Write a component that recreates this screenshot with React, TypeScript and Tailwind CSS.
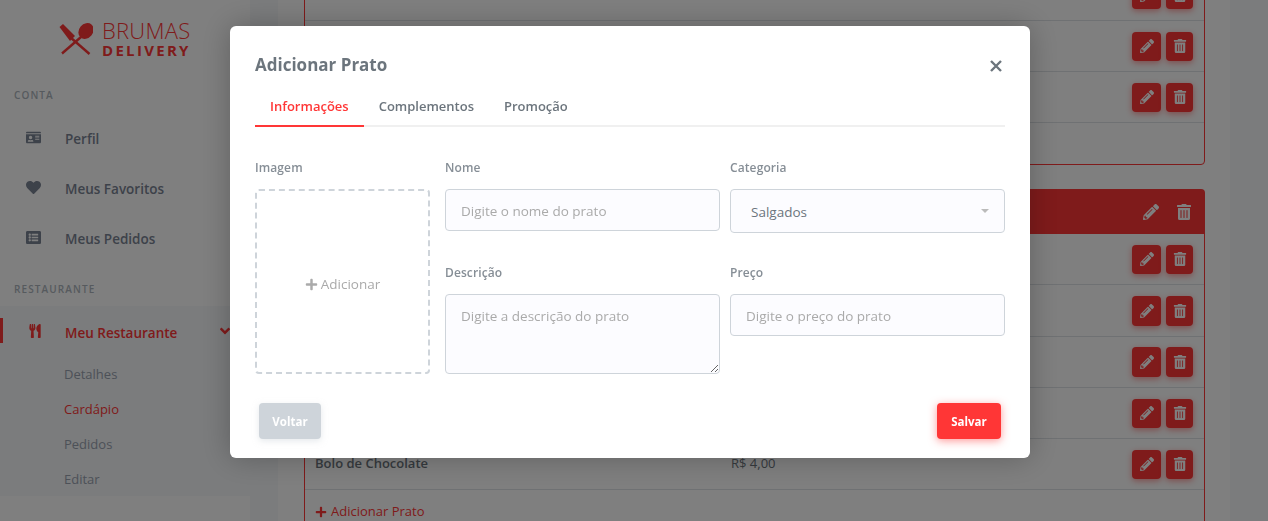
import { FaIdCard, FaHeart, FaListAlt, FaUtensils, FaPencilAlt, FaTrashAlt, FaPlus, FaAngleDown } from "react-icons/fa";

function Logo() {
  return (
    <div className="flex items-start pl-[59px] pt-[23px] h-[86px]">
      <svg width="34" height="33" viewBox="0 0 34 33" className="text-[#ff3636] shrink-0">
        <path d="M0.5 4 L4 1 L16 13 L11 18 Z" fill="currentColor" />
        <path d="M11 14 L30.5 31" stroke="currentColor" strokeWidth="2.4" fill="none" />
        <path d="M22 14 L3 30.5" stroke="currentColor" strokeWidth="2.4" fill="none" />
        <ellipse cx="27" cy="8" rx="7" ry="8.5" transform="rotate(40 27 8)" fill="currentColor" />
      </svg>
      <div className="ml-[9px] -mt-[3px] flex flex-col text-[#ff3636]">
        <span className="text-[22px] leading-[20px] font-light tracking-[0.25px]">BRUMAS</span>
        <span className="mt-[3px] text-[15px] leading-[15px] font-bold tracking-[2.3px]">DELIVERY</span>
      </div>
    </div>
  );
}

function SideItem({ icon, label }: { icon: React.ReactNode; label: string }) {
  return (
    <div className="flex items-center h-[50px] pl-[26px] text-[#7b8494]">
      <span className="w-[39px] text-[15px] flex -mt-[3px]">{icon}</span>
      <span className="text-[13.5px] font-semibold">{label}</span>
    </div>
  );
}

function Sidebar() {
  return (
    <aside className="w-[250px] shrink-0 bg-white">
      <Logo />
      <div className="h-[15px] mt-[2px] pl-[14px] text-[10px] leading-[15px] font-semibold tracking-[1.1px] text-[#adb5bd]">CONTA</div>
      <div className="mt-[11px]">
        <SideItem icon={<FaIdCard />} label="Perfil" />
        <SideItem icon={<FaHeart />} label="Meus Favoritos" />
        <SideItem icon={<FaListAlt />} label="Meus Pedidos" />
      </div>
      <div className="h-[15px] mt-[18px] pl-[14px] text-[10px] leading-[15px] font-semibold tracking-[1.1px] text-[#adb5bd]">RESTAURANTE</div>
      <div className="mt-[9px] bg-[#f6f8fb] h-[190px]">
        <div className="relative flex items-center h-[54px] pl-[26px] text-[#ff3636]">
          <span className="absolute left-0 top-[12px] w-[3px] h-[25px] bg-[#ff3636]" />
          <span className="w-[39px] text-[14px] flex pl-[2px] -mt-[4px]"><FaUtensils /></span>
          <span className="text-[13.5px] font-semibold">Meu Restaurante</span>
          <FaAngleDown className="absolute left-[217px] top-[17px] text-[16px]" />
        </div>
        <div className="pl-[64px] text-[13px] text-[#9aa3b0]">
          <div className="h-[35px] leading-[28px]">Detalhes</div>
          <div className="h-[35px] leading-[28px] text-[#ff3636] font-medium">Cardápio</div>
          <div className="h-[35px] leading-[28px]">Pedidos</div>
          <div className="h-[35px] leading-[28px]">Editar</div>
        </div>
      </div>
    </aside>
  );
}

function Row({ h, name, price, tall }: { h: string; name?: string; price?: string; tall?: boolean }) {
  return (
    <div className={`flex items-center justify-between border-b border-[#dee2e6] pl-[10px] pr-[11px] ${h}`}>
      <div className="flex items-center text-[13px] text-[#6c757d]">
        {name && <span className="w-[416px] font-semibold">{name}</span>}
        {price && <span>{price}</span>}
      </div>
      <div className="flex gap-[5px]">
        <span className={`w-[29px] ${tall ? "h-[30px]" : "h-[29px]"} flex items-center justify-center rounded-[4px] bg-[#ff3636] text-white text-[14px] shadow-[0_2px_6px_rgba(255,54,54,0.5)]`}><FaPencilAlt /></span>
        <span className={`w-[27px] ${tall ? "h-[30px]" : "h-[29px]"} flex items-center justify-center rounded-[4px] bg-[#ff3636] text-white text-[14px] shadow-[0_2px_6px_rgba(255,54,54,0.5)]`}><FaTrashAlt /></span>
      </div>
    </div>
  );
}

function Content() {
  return (
    <div className="ml-[28px] w-[952px] shrink-0 bg-white pl-[26px] pr-[25px] overflow-hidden">
      <div className="-mt-[32px] border border-[#ff3636] rounded-b-[4px]">
        <Row h="h-[52px]" />
        <Row h="h-[51px]" />
        <Row h="h-[51px]" />
        <div className="h-[41px]" />
      </div>
      <div className="mt-[24px] rounded-t-[4px] h-[45px] bg-[#ff3636] flex items-center justify-end gap-[17px] pr-[13px] text-white text-[16px]">
        <FaPencilAlt />
        <FaTrashAlt />
      </div>
      <div className="border-x border-[#ff3636] h-[400px]">
        <Row h="h-[51px]" />
        <Row h="h-[52px]" tall />
        <Row h="h-[51px]" tall />
        <Row h="h-[51px]" />
        <Row h="h-[51px]" name="Bolo de Chocolate" price="R$ 4,00" />
        <div className="flex items-center gap-[4px] pl-[10px] pt-[12px] text-[13px] font-medium text-[#ff3636]">
          <FaPlus className="text-[12px]" />
          <span>Adicionar Prato</span>
        </div>
      </div>
    </div>
  );
}

const inputCls = "w-full bg-[#fcfcff] border border-[#ced4da] rounded-[4px] px-[15px] text-[13.5px] text-[#6c757d] placeholder:text-[#aaaaaa] outline-none";
const labelCls = "block h-[18px] text-[12px] leading-[18px] font-semibold tracking-[0.1px] text-[#868e96]";

function Modal() {
  return (
    <div className="fixed inset-0 bg-black/50 flex justify-center items-start pt-[26px] pr-[8px]">
      <div className="w-[800px] h-[432px] bg-white rounded-[6px] shadow-[0_0_30px_rgba(0,0,0,0.25)] px-[25px] pt-[25px]">
        <div className="flex items-center justify-between h-[28px]">
          <h2 className="text-[17px] font-bold text-[#6c757d]">Adicionar Prato</h2>
          <svg width="12" height="12" viewBox="0 0 12 12" className="text-[#6c757d] mr-[3px] mt-[2px]">
            <path d="M1 1 L11 11 M11 1 L1 11" stroke="currentColor" strokeWidth="2.4" fill="none" />
          </svg>
        </div>
        <div className="mt-[10px] flex border-b-2 border-[#f0f0f0] h-[38px] text-[13px] font-semibold text-[#6c757d]">
          <div className="px-[15px] h-[38px] leading-[34px] border-b-2 border-[#ff3636] text-[#ff3636]">Informações</div>
          <div className="px-[15px] h-[38px] leading-[34px]">Complementos</div>
          <div className="px-[15px] h-[38px] leading-[34px]">Promoção</div>
        </div>
        <div className="mt-[32px] flex">
          <div className="w-[175px] mr-[15px]">
            <label className={labelCls}>Imagem</label>
            <div className="mt-[12px] h-[185px] border-2 border-dashed border-[#ced4da] rounded-[4px] flex items-center justify-center gap-[3px] pt-[5px] text-[#aaaaaa] text-[13.5px]">
              <FaPlus className="text-[13px]" />
              <span>Adicionar</span>
            </div>
          </div>
          <div className="flex-1 grid grid-cols-2 gap-x-[10px] content-start">
            <div className="h-[105px]">
              <label className={labelCls}>Nome</label>
              <input className={`${inputCls} mt-[12px] h-[42px] pt-[2px]`} placeholder="Digite o nome do prato" />
            </div>
            <div className="h-[105px]">
              <label className={labelCls}>Categoria</label>
              <div className="relative mt-[12px]">
                <div className={`${inputCls} h-[44px] flex items-center pl-[20px] pt-[2px] text-[12.5px]`}>Salgados</div>
                <span className="absolute right-[16px] top-[20px] border-x-[4px] border-x-transparent border-t-[4px] border-t-[#bbbbbb]" />
              </div>
            </div>
            <div>
              <label className={labelCls}>Descrição</label>
              <textarea className={`${inputCls} mt-[12px] h-[80px] pt-[11px] block`} placeholder="Digite a descrição do prato" />
            </div>
            <div>
              <label className={labelCls}>Preço</label>
              <input className={`${inputCls} mt-[12px] h-[42px] pt-[2px]`} placeholder="Digite o preço do prato" />
            </div>
          </div>
        </div>
        <div className="mt-[29px] flex justify-between px-[4px]">
          <button className="w-[62px] h-[36px] pt-[2px] rounded-[4px] bg-[#ced4da] text-white text-[11.5px] font-bold shadow-[0_2px_6px_rgba(206,212,218,0.5)]">Voltar</button>
          <button className="w-[64px] h-[36px] pt-[2px] rounded-[4px] bg-[#ff3636] text-white text-[11.5px] font-bold shadow-[0_2px_8px_rgba(255,54,54,0.5)]">Salvar</button>
        </div>
      </div>
    </div>
  );
}

export default function App() {
  return (
    <div className="h-[521px] overflow-hidden flex bg-[#f6f8fb] font-['Open_Sans',sans-serif]">
      <Sidebar />
      <Content />
      <Modal />
    </div>
  );
}
